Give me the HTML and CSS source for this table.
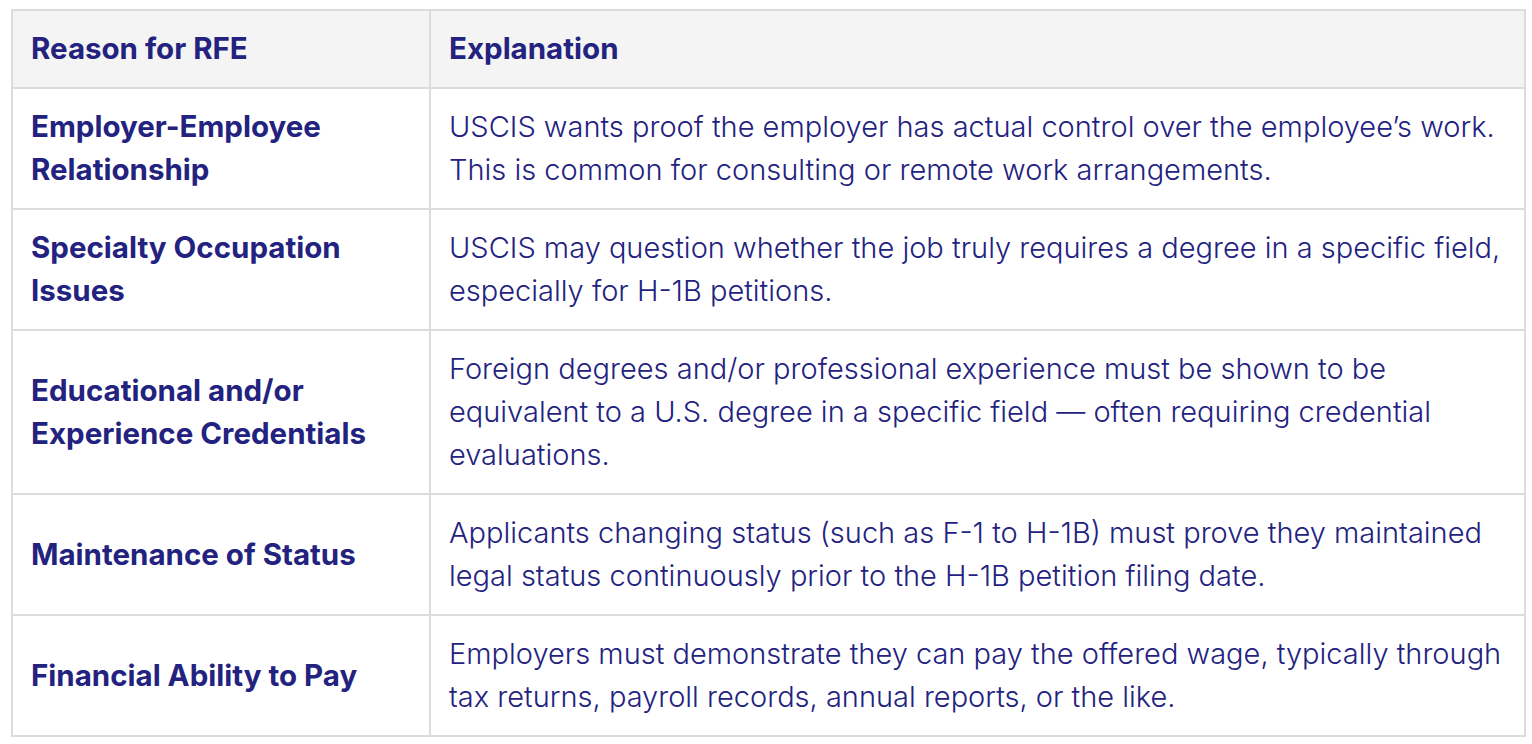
FILE: index.html
```html
<!DOCTYPE html>
<html lang="en">
<head>
<meta charset="utf-8">
<title>RFE Reasons</title>
<link rel="stylesheet" href="styles.css">
</head>
<body>
<table class="rfe-table">
  <thead>
    <tr>
      <th class="col-reason">Reason for RFE</th>
      <th class="col-expl">Explanation</th>
    </tr>
  </thead>
  <tbody>
    <tr>
      <td class="reason">Employer-Employee Relationship</td>
      <td class="expl">USCIS wants proof the employer has actual control over the employee’s work. This is common for consulting or remote work arrangements.</td>
    </tr>
    <tr>
      <td class="reason">Specialty Occupation Issues</td>
      <td class="expl">USCIS may question whether the job truly requires a degree in a specific field, especially for H-1B petitions.</td>
    </tr>
    <tr>
      <td class="reason">Educational and/or Experience Credentials</td>
      <td class="expl">Foreign degrees and/or professional experience must be shown to be equivalent to a U.S. degree in a specific field — often requiring credential evaluations.</td>
    </tr>
    <tr>
      <td class="reason">Maintenance of Status</td>
      <td class="expl">Applicants changing status (such as F-1 to H-1B) must prove they maintained legal status continuously prior to the H-1B petition filing date.</td>
    </tr>
    <tr>
      <td class="reason">Financial Ability to Pay</td>
      <td class="expl">Employers must demonstrate they can pay the offered wage, typically through tax returns, payroll records, annual reports, or the like.</td>
    </tr>
  </tbody>
</table>
</body>
</html>
```
FILE: styles.css
```css
html, body {
  margin: 0;
  padding: 0;
  background: #ffffff;
}
body {
  padding: 9px 0 0 11px;
  font-family: Inter, "Liberation Sans", sans-serif;
  color: #23227f;
}
.rfe-table {
  border-collapse: collapse;
  width: 1515px;
  table-layout: fixed;
  border: 2px solid #dcdcdc;
}
.rfe-table th,
.rfe-table td {
  border: 2px solid #dcdcdc;
  padding: 16px 18px 17px 18px;
  font-size: 29.5px;
  line-height: 43px;
  text-align: left;
  vertical-align: middle;
}
.rfe-table thead th {
  background: #f4f4f4;
  font-weight: 700;
}
.col-reason {
  width: 380px;
}
.reason {
  font-weight: 700;
}
.rfe-table td.expl {
  font-weight: 300;
  font-size: 29px;
}
```
